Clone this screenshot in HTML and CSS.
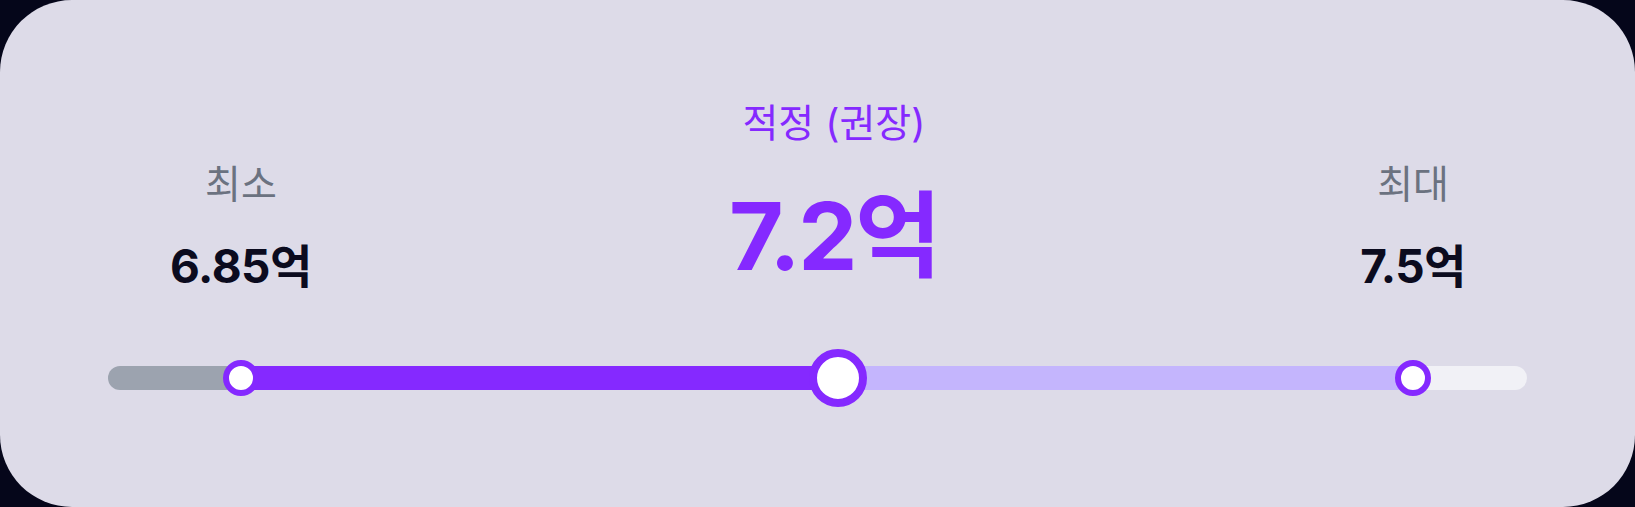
FILE: index.html
```html
<!DOCTYPE html>
<html lang="ko">
<head>
    <meta charset="UTF-8">
    <meta name="viewport" content="width=device-width, initial-scale=1.0">
    <title>적정 가격 범위</title>
    <link rel="stylesheet" href="styles.css">
</head>
<body>
    <div class="card">
        <div class="range">
            <div class="marks">
                <div class="mark side" style="left: 9.37%">
                    <div class="mark-label">최소</div>
                    <div class="mark-value">6.85억</div>
                </div>
                <div class="mark main" style="left: 51.44%">
                    <div class="mark-label">적정 (권장)</div>
                    <div class="mark-value">7.2억</div>
                </div>
                <div class="mark side" style="left: 91.97%">
                    <div class="mark-label">최대</div>
                    <div class="mark-value">7.5억</div>
                </div>
            </div>

            <div class="track">
                <div class="seg seg-below" style="width: 9.37%"></div>
                <div class="seg seg-low" style="width: 42.07%"></div>
                <div class="seg seg-high" style="width: 40.53%"></div>
                <div class="seg seg-above"></div>

                <span class="thumb" style="left: 9.37%"></span>
                <span class="thumb thumb-main" style="left: 51.44%"></span>
                <span class="thumb" style="left: 91.97%"></span>
            </div>
        </div>
    </div>
</body>
</html>
```

FILE: styles.css
```css
html, body {
    margin: 0;
    padding: 0;
}
body {
    background-color: #05061a; /* 바깥 어두운 배경 */
    font-family: "Inter", "Noto Sans CJK KR", sans-serif;
}
.card {
    height: 507px;
    box-sizing: border-box;
    background-color: #dddbe8;
    border-radius: 72px;
    padding: 0 108px;
}

/* 값 표시 영역 */
.marks {
    position: relative;
    height: 366px;
}
.mark {
    position: absolute;
    transform: translateX(-50%);
    display: flex;
    flex-direction: column;
    align-items: center;
    white-space: nowrap;
    line-height: 1;
}
.mark-label {
    font-size: 39px;
    color: #6b7280;
}
.mark-value {
    font-weight: 700;
    color: #0b0b1e;
}
.side {
    top: 164px;
}
.side .mark-value {
    font-size: 46px;
    margin-top: 40px;
    letter-spacing: -0.5px;
}
.main {
    top: 103px;
    margin-left: -4px;
}
.main .mark-label {
    color: #8529ff;
}
.main .mark-value {
    font-size: 94px;
    margin-top: 47px;
    color: #8529ff;
    letter-spacing: -2.5px;
}

/* 슬라이더 트랙 */
.track {
    position: relative;
    display: flex;
    height: 24px;
}
.seg {
    height: 100%;
}
.seg-below {
    background-color: #9ca3af;
    border-radius: 12px 0 0 12px;
}
.seg-low {
    background-color: #8529ff;
}
.seg-high {
    background-color: #c4b5fd;
}
.seg-above {
    flex: 1;
    background-color: #f1f1f6;
    border-radius: 0 12px 12px 0;
}
.thumb {
    position: absolute;
    top: 50%;
    width: 36px;
    height: 36px;
    box-sizing: border-box;
    border: 6px solid #8529ff;
    border-radius: 50%;
    background-color: #fff;
    transform: translate(-50%, -50%);
}
.thumb-main {
    width: 58px;
    height: 58px;
    border-width: 8px;
}
```
